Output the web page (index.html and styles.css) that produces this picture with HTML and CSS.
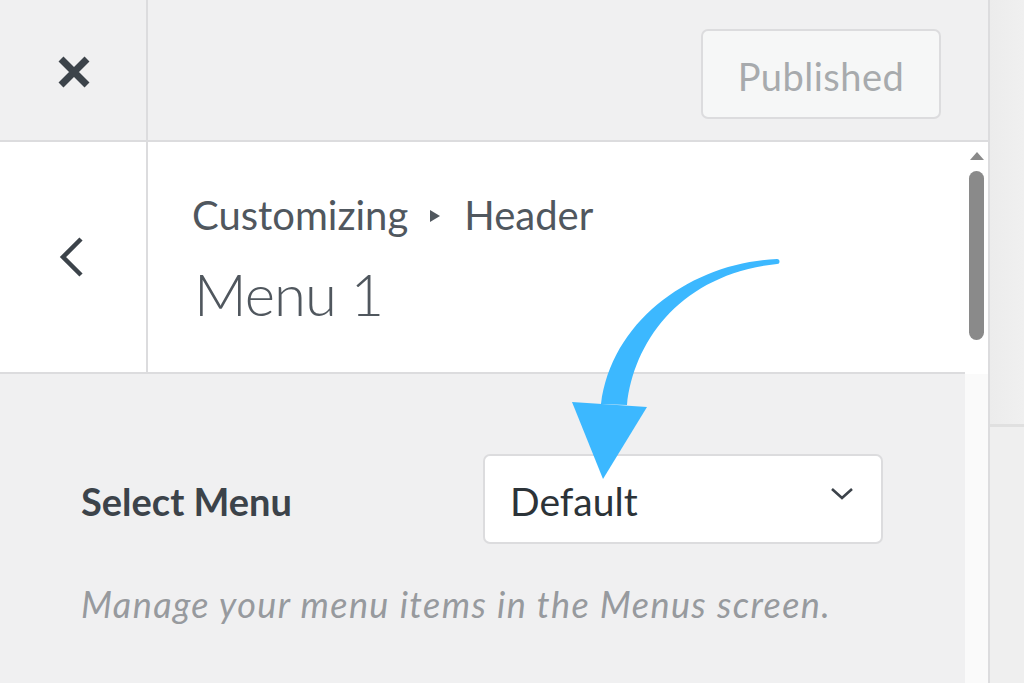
FILE: index.html
```html
<!DOCTYPE html>
<html lang="en">
<head>
    <meta charset="UTF-8">
    <meta name="viewport" content="width=device-width, initial-scale=1.0">
    <title>Customizing - Menu 1</title>
    <link rel="stylesheet" href="styles.css">
</head>
<body>
    <div class="customizer">
        <div class="sidebar">
            <!-- Top bar with close and publish -->
            <div class="topbar">
                <a href="#" class="close-btn" aria-label="Close">
                    <svg width="36" height="36" viewBox="0 0 36 36"><path d="M5 5 L31 31 M31 5 L5 31" stroke="#3c434a" stroke-width="7" fill="none"/></svg>
                </a>
                <div class="topbar-actions">
                    <button class="publish-btn" disabled>Published</button>
                </div>
            </div>
            <div class="panel">
                <div class="panel-main">
                    <!-- Section header -->
                    <div class="section-header">
                        <a href="#" class="back-btn" aria-label="Back">
                            <svg width="28" height="42" viewBox="0 0 28 42"><path d="M24 3 L6 21 L24 39" stroke="#3c434a" stroke-width="4.5" fill="none"/></svg>
                        </a>
                        <div class="section-title">
                            <div class="breadcrumb">Customizing<span class="crumb-sep"><svg width="10" height="12" viewBox="0 0 10 12"><path d="M0 0 L10 6 L0 12 Z" fill="#50575e"/></svg></span>Header</div>
                            <h2 class="menu-name">Menu 1</h2>
                        </div>
                    </div>
                    <!-- Menu controls -->
                    <div class="section-body">
                        <div class="control-row">
                            <label class="control-label">Select Menu</label>
                            <div class="select-box">
                                <span>Default</span>
                                <svg width="24" height="14" viewBox="0 0 24 14"><path d="M2 2 L12 11 L22 2" stroke="#3c434a" stroke-width="2.6" fill="none"/></svg>
                            </div>
                        </div>
                        <p class="description">Manage your menu items in the Menus screen.</p>
                    </div>
                </div>
                <div class="scroll-track">
                    <span class="scroll-up"></span>
                    <span class="scroll-thumb"></span>
                </div>
            </div>
        </div>
        <div class="preview">
            <div class="preview-top"></div>
        </div>
    </div>

    <!-- Annotation arrow -->
    <svg class="annotation" width="1024" height="683" viewBox="0 0 1024 683">
        <path d="M777 259 C695 262 612 318 601 404 L627 405 C634 340 682 274 777 264 A2.5 2.5 0 0 0 777 259 Z" fill="#3cb8ff"/>
        <path d="M572 402 L647 407 L603 479 Z" fill="#3cb8ff"/>
    </svg>
</body>
</html>
```

FILE: styles.css
```css
/* Variables for styling */
:root {
    --bg: #f0f0f1;
    --border: #dcdcde;
    --text: #50575e;
    --dark: #3c434a;
    --muted: #8c8f94;
    --white: #fff;
    --accent: #3cb8ff;
}

* {
    margin: 0;
    padding: 0;
    box-sizing: border-box;
}

body {
    font-family: Lato, "Open Sans", sans-serif;
    background: var(--bg);
    width: 1024px;
    height: 683px;
    overflow: hidden;
}

.customizer {
    display: flex;
    height: 683px;
}

/* Sidebar */
.sidebar {
    width: 990px;
    border-right: 2px solid var(--border);
    display: flex;
    flex-direction: column;
}

.topbar {
    height: 142px;
    display: flex;
    border-bottom: 2px solid var(--border);
}

.close-btn {
    width: 148px;
    border-right: 2px solid var(--border);
    display: flex;
    align-items: center;
    justify-content: center;
    padding-left: 2px;
    padding-top: 4px;
}

.topbar-actions {
    flex: 1;
    display: flex;
    justify-content: flex-end;
    align-items: flex-start;
    padding-top: 29px;
    padding-right: 47px;
}

.publish-btn {
    width: 240px;
    height: 90px;
    background: #f6f7f7;
    border: 2px solid var(--border);
    border-radius: 7px;
    color: #a7aaad;
    font-family: Lato, "Open Sans", sans-serif;
    font-size: 38px;
    line-height: 1;
    letter-spacing: 0.5px;
    padding-top: 4px;
}

.panel {
    flex: 1;
    display: flex;
}

.panel-main {
    flex: 1;
    display: flex;
    flex-direction: column;
}

/* Section header */
.section-header {
    height: 232px;
    background: var(--white);
    border-bottom: 2px solid var(--border);
    display: flex;
}

.back-btn {
    width: 148px;
    border-right: 2px solid var(--border);
    display: flex;
    align-items: center;
    justify-content: center;
    padding-right: 4px;
}

.section-title {
    padding-left: 44px;
    padding-top: 49px;
    color: var(--text);
}

.breadcrumb {
    font-size: 40px;
    line-height: 1.2;
    display: flex;
    align-items: center;
}

.crumb-sep {
    display: inline-flex;
    margin: 0 24px 0 22px;
    padding-top: 2px;
}

.menu-name {
    font-size: 58px;
    font-weight: 300;
    line-height: 1.2;
    letter-spacing: -1px;
    margin-top: 20px;
    margin-left: 2px;
}

/* Section body */
.section-body {
    flex: 1;
    padding: 80px 0 0 81px;
}

.control-row {
    display: flex;
    align-items: center;
}

.control-label {
    width: 402px;
    font-size: 38px;
    font-weight: bold;
    color: var(--dark);
    padding-top: 4px;
}

.select-box {
    width: 400px;
    height: 90px;
    background: var(--white);
    border: 2px solid var(--border);
    border-radius: 7px;
    display: flex;
    align-items: center;
    justify-content: space-between;
    padding: 4px 27px 0 25px;
    font-size: 39px;
    color: #2c3338;
}

.select-box svg {
    margin-bottom: 14px;
}

.description {
    margin-top: 39px;
    font-size: 36px;
    line-height: 1.2;
    font-style: italic;
    color: #979a9e;
    letter-spacing: 1.4px;
}

/* Scrollbar */
.scroll-track {
    width: 23px;
    background: linear-gradient(to bottom, var(--white) 232px, #fafafa 232px);
    display: flex;
    flex-direction: column;
    align-items: center;
    padding-top: 10px;
}

.scroll-up {
    width: 0;
    height: 0;
    border-left: 7px solid transparent;
    border-right: 7px solid transparent;
    border-bottom: 8px solid #8a8a8a;
}

.scroll-thumb {
    width: 15px;
    height: 169px;
    margin-top: 11px;
    background: #8a8a8a;
    border-radius: 8px;
}

/* Preview pane */
.preview {
    flex: 1;
    background: #efefef;
}

.preview-top {
    height: 427px;
    border-bottom: 3px solid #e0e0e0;
    background: linear-gradient(to right, #ececec, #f0f0f0);
}

/* Annotation arrow over the page */
.annotation {
    position: absolute;
    top: 0;
    left: 0;
    pointer-events: none;
}
```
